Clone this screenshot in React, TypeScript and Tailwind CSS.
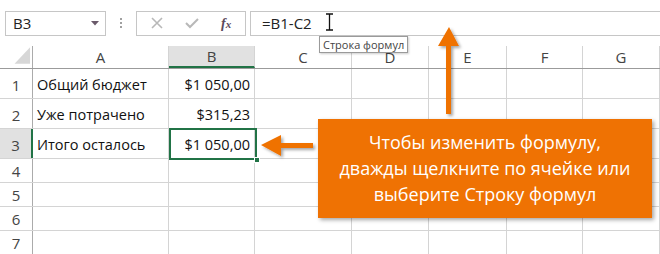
import React from "react";

const cols = [
  { l: "", w: 33 },
  { l: "A", w: 136 },
  { l: "B", w: 86 },
  { l: "C", w: 97 },
  { l: "D", w: 77 },
  { l: "E", w: 78 },
  { l: "F", w: 76 },
  { l: "G", w: 77 },
];

const rows = [
  { n: "1", h: 30, a: "Общий бюджет", b: "$1 050,00" },
  { n: "2", h: 30, a: "Уже потрачено", b: "$315,23" },
  { n: "3", h: 30, a: "Итого осталось", b: "$1 050,00" },
  { n: "4", h: 24, a: "", b: "" },
  { n: "5", h: 24, a: "", b: "" },
  { n: "6", h: 24, a: "", b: "" },
  { n: "7", h: 24, a: "", b: "" },
];

const font = { fontFamily: "'Open Sans', 'Noto Sans', sans-serif" };

export default function App() {
  return (
    <div className="relative w-[660px] h-[254px] overflow-hidden bg-white" style={font}>
      {/* formula bar */}
      <div className="flex items-center h-[46px]">
        <div className="ml-[5px] w-[101px] h-[25px] border border-[#c6c6c6] flex items-center justify-between pl-[7px] pr-[6px] text-[15px] text-[#222]">
          <span>B3</span>
          <svg width="8" height="5" viewBox="0 0 8 5"><polygon points="0,0 8,0 4,4.5" fill="#6a5a6a" /></svg>
        </div>
        <div className="ml-[14px] flex flex-col gap-[2px]">
          <div className="w-[2px] h-[2px] bg-[#a0a0a0]" />
          <div className="w-[2px] h-[2px] bg-[#a0a0a0]" />
          <div className="w-[2px] h-[2px] bg-[#a0a0a0]" />
        </div>
        <div className="ml-[14px] w-[110px] h-[25px] border border-[#c6c6c6] flex items-center">
          <svg className="ml-[14px]" width="12" height="12" viewBox="0 0 12 12"><path d="M1 1 L11 11 M11 1 L1 11" stroke="#b8b8b8" strokeWidth="1.6" /></svg>
          <svg className="ml-[22px]" width="14" height="12" viewBox="0 0 14 12"><path d="M1 6 L5 10 L13 2" stroke="#b8b8b8" strokeWidth="2" fill="none" /></svg>
          <span className="ml-[22px] text-[14px] italic text-[#5b4a5b] font-bold" style={{ fontFamily: "'Liberation Serif', serif" }}>f<span className="text-[11px]">x</span></span>
        </div>
        <div className="ml-[4px] flex-1 h-[25px] border-y border-l border-[#c6c6c6] flex items-center pl-[11px] text-[15px] text-[#222]">
          =B1-C2
        </div>
      </div>

      {/* header row */}
      <div className="flex h-[23px] border-b border-[#9b9b9b]">
        {cols.map((c, i) => (
          <div
            key={i}
            style={{ width: c.w }}
            className={
              "flex items-center justify-center text-[15px] text-[#444] border-r border-[#d4d4d4] " +
              (i === 2 ? "bg-[#e1e1e1] border-b-2 border-b-[#217346]" : "") +
              (i === 0 ? " border-r-[#ababab]" : "")
            }
          >
            {i === 0 ? (
              <svg width="33" height="23" viewBox="0 0 33 23">
                <polygon points="15,18 31,18 31,1" fill="#d7d7d7" />
              </svg>
            ) : (
              <span className="pt-[1px]">{c.l}</span>
            )}
          </div>
        ))}
      </div>

      {/* rows */}
      {rows.map((r, ri) => (
        <div key={ri} className="flex border-b border-[#d4d4d4]" style={{ height: r.h }}>
          {cols.map((c, ci) => {
            if (ci === 0)
              return (
                <div
                  key={ci}
                  style={{ width: c.w }}
                  className={
                    "flex items-end justify-center text-[15px] text-[#444] border-r " +
                    (ri === 2 ? "bg-[#e1e1e1] border-r-2 border-[#217346]" : "border-[#ababab]") +
                    (r.h === 30 ? " pb-[2px]" : " pb-[0px]")
                  }
                >
                  {r.n}
                </div>
              );
            return (
              <div
                key={ci}
                style={{ width: c.w }}
                className={
                  "flex items-end text-[14.5px] text-[#111] border-r border-[#d4d4d4] pb-[2px] " +
                  (ci === 2 ? "justify-end pr-[4px]" : "pl-[4px]")
                }
              >
                {ci === 1 ? r.a : ci === 2 ? r.b : ""}
              </div>
            );
          })}
        </div>
      ))}

      {/* selection */}
      <div className="absolute left-[169px] top-[128px] w-[88px] h-[32px] border-2 border-[#217346]" />
      <div className="absolute left-[254px] top-[157px] w-[6px] h-[6px] bg-[#217346] border border-white" />

      {/* cursor */}
      <svg className="absolute left-[325px] top-[13px]" width="9" height="18" viewBox="0 0 9 18">
        <path d="M1 1 H8 M4.5 1 V17 M1 17 H8" stroke="#111" strokeWidth="1.3" fill="none" />
      </svg>

      {/* tooltip */}
      <div className="absolute left-[319px] top-[36px] h-[17px] px-[3px] bg-white border border-[#9a9a9a] text-[11px] leading-[15px] text-[#444] shadow-[1px_1px_2px_rgba(0,0,0,0.2)]">
        Строка формул
      </div>

      {/* arrows */}
      <svg className="absolute left-0 top-0 pointer-events-none" width="660" height="254" viewBox="0 0 660 254">
        <defs>
          <filter id="sh" x="-50%" y="-50%" width="200%" height="200%">
            <feDropShadow dx="2" dy="2" stdDeviation="1.5" floodColor="#000" floodOpacity="0.35" />
          </filter>
        </defs>
        <g filter="url(#sh)" fill="#ef7203">
          <polygon points="449,27 438,46 446,46 446,114 451,114 451,46 459,46" />
          <polygon points="261,145 281,135 281,143 313,143 313,148 281,148 281,156" />
        </g>
      </svg>

      {/* callout */}
      <div className="absolute left-[318px] top-[119px] w-[334px] h-[99px] bg-[#ef7203] shadow-[2px_2px_4px_rgba(0,0,0,0.35)] flex flex-col items-center justify-center text-white text-[18px] leading-[26px] pb-[2px]">
        <div>Чтобы изменить формулу,</div>
        <div>дважды щелкните по ячейке или</div>
        <div>выберите Строку формул</div>
      </div>
    </div>
  );
}
